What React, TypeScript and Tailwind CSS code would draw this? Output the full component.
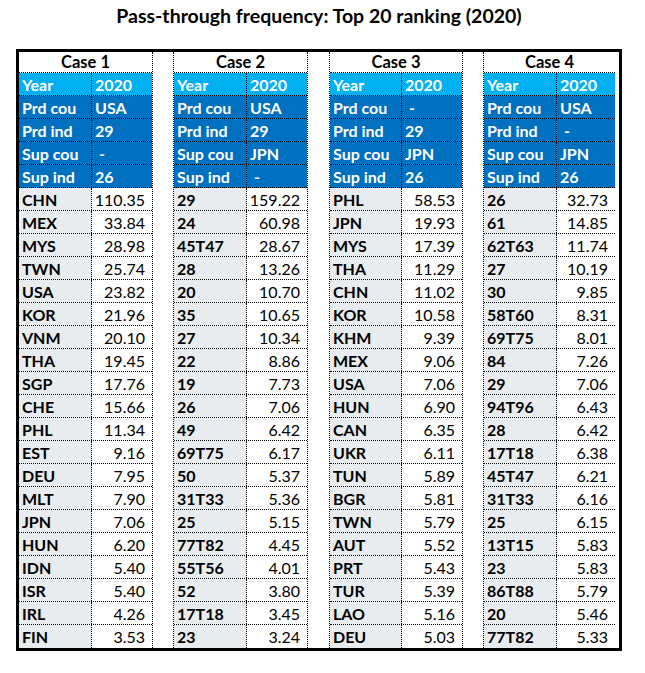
import React from "react";

type Case = {
  name: string;
  head: [string, string][];
  rows: [string, string][];
};

const cases: Case[] = [
  {
    name: "Case 1",
    head: [["Year", "2020"], ["Prd cou", "USA"], ["Prd ind", "29"], ["Sup cou", "\u00a0-"], ["Sup ind", "26"]],
    rows: [
      ["CHN", "110.35"], ["MEX", "33.84"], ["MYS", "28.98"], ["TWN", "25.74"], ["USA", "23.82"],
      ["KOR", "21.96"], ["VNM", "20.10"], ["THA", "19.45"], ["SGP", "17.76"], ["CHE", "15.66"],
      ["PHL", "11.34"], ["EST", "9.16"], ["DEU", "7.95"], ["MLT", "7.90"], ["JPN", "7.06"],
      ["HUN", "6.20"], ["IDN", "5.40"], ["ISR", "5.40"], ["IRL", "4.26"], ["FIN", "3.53"],
    ],
  },
  {
    name: "Case 2",
    head: [["Year", "2020"], ["Prd cou", "USA"], ["Prd ind", "29"], ["Sup cou", "JPN"], ["Sup ind", "\u00a0-"]],
    rows: [
      ["29", "159.22"], ["24", "60.98"], ["45T47", "28.67"], ["28", "13.26"], ["20", "10.70"],
      ["35", "10.65"], ["27", "10.34"], ["22", "8.86"], ["19", "7.73"], ["26", "7.06"],
      ["49", "6.42"], ["69T75", "6.17"], ["50", "5.37"], ["31T33", "5.36"], ["25", "5.15"],
      ["77T82", "4.45"], ["55T56", "4.01"], ["52", "3.80"], ["17T18", "3.45"], ["23", "3.24"],
    ],
  },
  {
    name: "Case 3",
    head: [["Year", "2020"], ["Prd cou", "\u00a0-"], ["Prd ind", "29"], ["Sup cou", "JPN"], ["Sup ind", "26"]],
    rows: [
      ["PHL", "58.53"], ["JPN", "19.93"], ["MYS", "17.39"], ["THA", "11.29"], ["CHN", "11.02"],
      ["KOR", "10.58"], ["KHM", "9.39"], ["MEX", "9.06"], ["USA", "7.06"], ["HUN", "6.90"],
      ["CAN", "6.35"], ["UKR", "6.11"], ["TUN", "5.89"], ["BGR", "5.81"], ["TWN", "5.79"],
      ["AUT", "5.52"], ["PRT", "5.43"], ["TUR", "5.39"], ["LAO", "5.16"], ["DEU", "5.03"],
    ],
  },
  {
    name: "Case 4",
    head: [["Year", "2020"], ["Prd cou", "USA"], ["Prd ind", "\u00a0-"], ["Sup cou", "JPN"], ["Sup ind", "26"]],
    rows: [
      ["26", "32.73"], ["61", "14.85"], ["62T63", "11.74"], ["27", "10.19"], ["30", "9.85"],
      ["58T60", "8.31"], ["69T75", "8.01"], ["84", "7.26"], ["29", "7.06"], ["94T96", "6.43"],
      ["28", "6.42"], ["17T18", "6.38"], ["45T47", "6.21"], ["31T33", "6.16"], ["25", "6.15"],
      ["13T15", "5.83"], ["23", "5.83"], ["86T88", "5.79"], ["20", "5.46"], ["77T82", "5.33"],
    ],
  },
];

const blockCls = [
  "border-r border-dotted border-black",
  "border-x border-dotted border-black",
  "border-x border-dotted border-black",
  "border-l border-dotted border-black",
];
const labelW = ["w-[73px]", "w-[73px]", "w-[72px]", "w-[73px]"];
const valueW = ["w-[60px]", "w-[60px]", "w-[60px]", "w-[58px]"];
const gapW = ["w-[20px]", "w-[21px]", "w-[20px]"];

function Block({ c, i }: { c: Case; i: number }) {
  return (
    <div className={`flex flex-col ${blockCls[i]}`}>
      <div className="h-[21px] border-b border-dotted border-black flex items-center justify-center font-bold text-[16.5px] text-black">
        {c.name}
      </div>
      {c.head.map(([l, v], r) => (
        <div
          key={l}
          className={`flex h-[23px] border-b border-dotted border-black text-white font-bold text-[16px] ${
            r === 0 ? "bg-[#00B0F0]" : "bg-[#0070C0]"
          }`}
        >
          <div className={`${labelW[i]} border-r border-dotted border-black pl-[3px] flex items-center pt-[1px]`}>{l}</div>
          <div className={`${valueW[i]} pl-[3px] flex items-center pt-[1px]`}>{v}</div>
        </div>
      ))}
      {c.rows.map(([l, v], r) => (
        <div
          key={r}
          className={`flex h-[23px] text-[16px] text-black ${
            r === c.rows.length - 1 ? "" : "border-b border-dotted border-black"
          }`}
        >
          <div className={`${labelW[i]} bg-[#E9ECEF] border-r border-dotted border-black pl-[3px] flex items-center font-bold pt-[1px]`}>
            {l}
          </div>
          <div className={`${valueW[i]} bg-white pr-[7px] flex items-center justify-end pt-[1px]`}>{v}</div>
        </div>
      ))}
    </div>
  );
}

export default function App() {
  return (
    <div className="w-[645px] h-[673px] bg-white" style={{ fontFamily: "Lato, 'Open Sans', sans-serif" }}>
      <div className="ml-[16px] w-[606px]">
        <div className="h-[30px] flex items-center justify-center font-bold text-[19.5px] text-black pt-[1px]">
          Pass-through frequency: Top 20 ranking (2020)
        </div>
        <div className="mt-[19px] border-[3px] border-black flex w-[606px]">
          <Block c={cases[0]} i={0} />
          <div className={gapW[0]} />
          <Block c={cases[1]} i={1} />
          <div className={gapW[1]} />
          <Block c={cases[2]} i={2} />
          <div className={gapW[2]} />
          <Block c={cases[3]} i={3} />
        </div>
      </div>
    </div>
  );
}
